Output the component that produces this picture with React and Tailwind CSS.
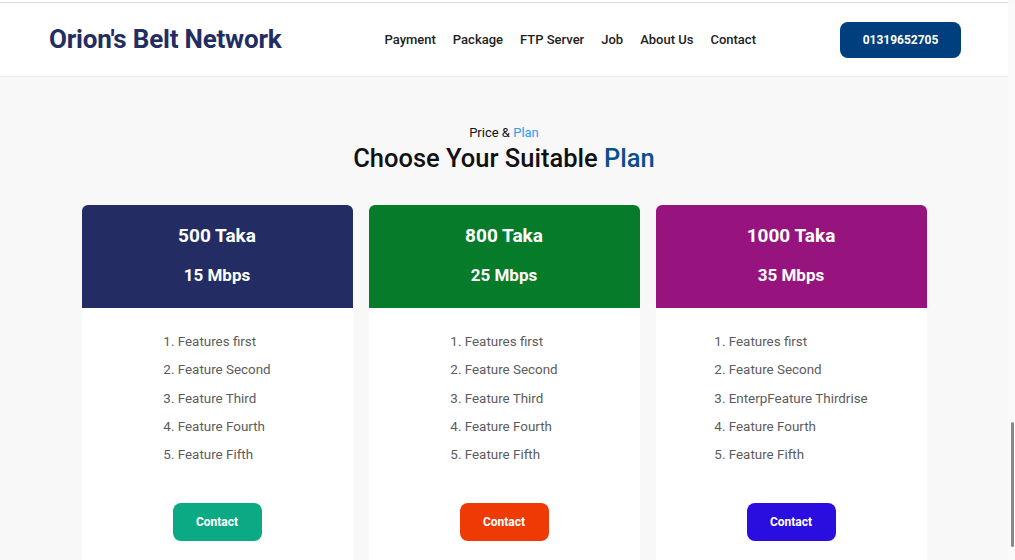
const plans = [
  {
    price: '500 Taka',
    speed: '15 Mbps',
    head: 'bg-[#232c63]',
    btn: 'bg-[#0baa84]',
    features: ['Features first', 'Feature Second', 'Feature Third', 'Feature Fourth', 'Feature Fifth'],
  },
  {
    price: '800 Taka',
    speed: '25 Mbps',
    head: 'bg-[#067c2a]',
    btn: 'bg-[#ee3a05]',
    features: ['Features first', 'Feature Second', 'Feature Third', 'Feature Fourth', 'Feature Fifth'],
  },
  {
    price: '1000 Taka',
    speed: '35 Mbps',
    head: 'bg-[#97147f]',
    btn: 'bg-[#2a0ee0]',
    features: ['Features first', 'Feature Second', 'EnterpFeature Thirdrise', 'Feature Fourth', 'Feature Fifth'],
  },
];

const links = ['Payment', 'Package', 'FTP Server', 'Job', 'About Us', 'Contact'];

const PlanCard = ({ plan }) => (
  <div className="w-[271px] bg-white rounded-t-md overflow-hidden">
    <div className={`${plan.head} h-[103px] flex flex-col items-center text-white font-bold pt-[19px]`}>
      <h3 className="text-[19px] leading-[24px]">{plan.price}</h3>
      <p className="text-[17px] leading-[20px] mt-[17px]">{plan.speed}</p>
    </div>
    <div className="flex flex-col items-center pt-[20px] pb-[20px]">
      <ol className="text-left text-[13.4px] leading-[28.25px] text-[#5c5c5c]">
        {plan.features.map((f, i) => (
          <li key={i}>
            {i + 1}. {f}
          </li>
        ))}
      </ol>
      <button className={`${plan.btn} mt-[34px] w-[89px] h-[38px] rounded-lg text-white text-[12px] font-bold`}>
        Contact
      </button>
    </div>
  </div>
);

export default function App() {
  return (
    <div className="relative h-[560px] overflow-hidden bg-[#f8f8f8] font-['Roboto',sans-serif]">
      <div className="w-[1008px]">
        <div className="h-[3px] border-b border-[#d9d9d9] bg-white" />
        <header className="h-[74px] bg-white border-b border-[#ebebeb] flex items-center pl-[49px] pr-[47px]">
          <h1 className="text-[26px] font-bold text-[#232c63] tracking-[-0.2px]">Orion's Belt Network</h1>
          <nav className="flex gap-[17px] text-[13px] font-medium text-[#222] ml-[103px]">
            {links.map((l) => (
              <a key={l} href="#">
                {l}
              </a>
            ))}
          </nav>
          <button className="ml-auto w-[121px] h-[36px] rounded-lg bg-[#003f7d] text-white text-[12px] font-bold">
            01319652705
          </button>
        </header>

        <section className="flex flex-col items-center pt-[47px]">
          <p className="text-[13px] leading-[17px] text-[#111]">
            Price & <span className="text-[#2a9df4]">Plan</span>
          </p>
          <h2 className="text-[25.5px] leading-[32px] font-medium text-[#111] mt-[1px]">
            Choose Your Suitable <span className="text-[#0b4f8e]">Plan</span>
          </h2>
          <div className="flex gap-[16px] mt-[31px]">
            {plans.map((p) => (
              <PlanCard key={p.price} plan={p} />
            ))}
          </div>
        </section>
      </div>

      <div className="absolute right-0 top-[4px] bottom-0 w-[7px] bg-[#fafafa]">
        <div className="absolute right-[1px] top-[418px] h-[125px] w-[3px] rounded-full bg-[#8a8a8a]" />
      </div>
    </div>
  );
}
